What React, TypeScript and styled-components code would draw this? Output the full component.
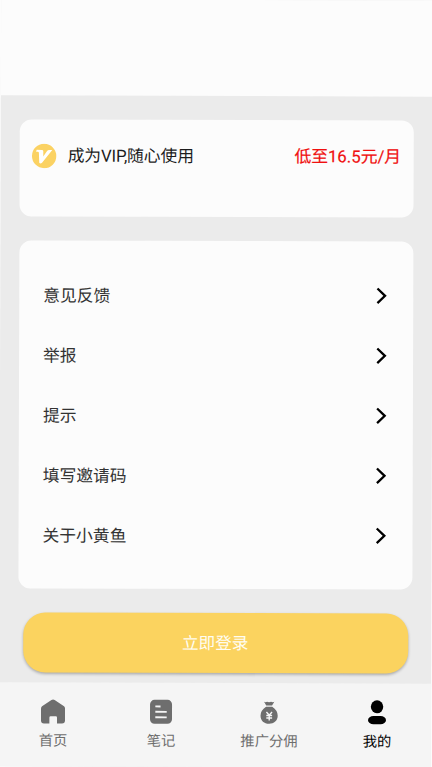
import React from "react";
import styled, { createGlobalStyle } from "styled-components";

const GlobalStyle = createGlobalStyle`
  * { box-sizing: border-box; }
  body {
    margin: 0;
    background: #fcfcfc;
    font-family: Roboto, "Noto Sans CJK SC", sans-serif;
    overflow: hidden;
  }
`;

const Page = styled.div`
  width: 432px;
  height: 767px;
  display: flex;
  flex-direction: column;
  background: #ebebeb;
  transform: rotate(0.17deg);
`;

const Header = styled.header`
  height: 96px;
  flex: none;
  background: #fcfcfc;
`;

const Content = styled.main`
  flex: 1;
  display: flex;
  flex-direction: column;
  padding: 24px 19px 0;
`;

const Card = styled.section`
  flex: none;
  background: #fcfcfc;
  border-radius: 12px;
`;

const VipCard = styled(Card)`
  height: 97px;
  padding: 23.5px 12.5px 0 11.5px;
`;

const VipRow = styled.div`
  display: flex;
  align-items: center;
  height: 25px;
`;

const VipTitle = styled.span`
  margin-left: 11.5px;
  padding-top: 1px;
  font-size: 16.8px;
  line-height: 25px;
  letter-spacing: -0.1px;
  color: #1c1c1c;
`;

const VipPrice = styled.span`
  margin-left: auto;
  font-size: 16.8px;
  line-height: 25px;
  color: #f01010;
  -webkit-text-stroke: 0.2px #f01010;
`;

const MenuCard = styled(Card)`
  height: 347.5px;
  margin-top: 24px;
  padding: 24px 26px 0 24px;
`;

const MenuRow = styled.div`
  display: flex;
  align-items: center;
  justify-content: space-between;
  height: 60px;
  font-size: 16.8px;
  color: #333;
`;

const LoginButton = styled.button`
  flex: none;
  height: 59.5px;
  margin: 24.5px 4.5px 0;
  padding: 0 0 2px;
  border: 0;
  border-radius: 22px;
  background: #fbd35f;
  color: #fffdf2;
  font: inherit;
  font-size: 16.6px;
  box-shadow: 0 1.5px 3px rgba(0, 0, 0, 0.28);
`;

const TabBar = styled.nav`
  flex: none;
  height: 84px;
  display: grid;
  grid-template-columns: repeat(4, 1fr);
  background: #f5f5f5;
`;

const Tab = styled.div<{ $active?: boolean }>`
  display: flex;
  flex-direction: column;
  align-items: center;
  padding: 16px 0 0 0;
  color: ${(p) => (p.$active ? "#000" : "#6e6e6e")};
`;

const TabLabel = styled.span`
  margin-top: 6px;
  font-size: 14.3px;
  line-height: 20px;
`;

const Icon = styled.svg`
  display: block;
  flex: none;
`;

const VipIcon = () => (
  <Icon width="25" height="25" viewBox="0 0 25 25">
    <circle cx="12.5" cy="12.5" r="12.2" fill="#fbd263" />
    <path d="M5 6.4 L10.2 6.4 Q11.6 6.4 11.6 7.8 L11.6 13 L15.4 7.6 Q16.2 6.6 17.4 6.6 L20.6 6.6 L10.4 19.2 Q8.9 20.6 7.6 19.4 L7.2 9.2 Q7.1 8.2 6.3 8.2 L4.4 8.2 Z" fill="#fff" />
  </Icon>
);

const Chevron = () => (
  <Icon width="12" height="18" viewBox="0 0 12 18">
    <path d="M2.2 2 L9.8 9.3 L2.2 16.6" fill="none" stroke="#000" strokeWidth="2.3" />
  </Icon>
);

const HomeIcon = () => (
  <Icon width="26" height="26" viewBox="0 0 26 26">
    <path d="M11.4 1.5 Q13 .4 14.6 1.5 L24 7.8 Q25 8.6 25 10 V22 Q25 25 22 25 H17 V19 Q17 17.8 15.8 17.8 H10.6 Q9.4 17.8 9.4 19 V25 H4 Q1 25 1 22 V10 Q1 8.6 2 7.8 Z" fill="currentColor" />
  </Icon>
);

const NoteIcon = () => (
  <Icon width="26" height="26" viewBox="0 0 26 26">
    <rect x="2" y="1" width="22" height="24" rx="4.5" fill="currentColor" />
    <path d="M7.3 7.6 H12.5 M7.3 13 H18.7 M7.3 18.5 H18.7" stroke="#f5f5f5" strokeWidth="1.9" />
  </Icon>
);

const MoneyIcon = () => (
  <Icon width="26" height="26" viewBox="0 0 26 26">
    <path d="M8 2.6 Q9.6 3.4 11 2.6 Q13 3.4 15 2.6 Q16.7 3.4 18.3 2.6 L16 6.4 H10.2 Z" fill="currentColor" />
    <path d="M10 7.6 H16.2 Q21.7 11.2 21.7 16.6 C21.7 21.6 18 24.6 13.1 24.6 C8.2 24.6 4.5 21.6 4.5 16.6 Q4.5 11.2 10 7.6 Z" fill="currentColor" />
    <path d="M10.4 12.8 L13.2 16 L16 12.8 M10.3 16.3 H16.1 M10.3 18.9 H16.1 M13.2 16 V21.4" fill="none" stroke="#f5f5f5" strokeWidth="1.4" />
  </Icon>
);

const UserIcon = () => (
  <Icon width="26" height="26" viewBox="0 0 26 26">
    <ellipse cx="13" cy="7.3" rx="6.2" ry="6.5" fill="currentColor" />
    <rect x="4" y="16.6" width="18" height="8.2" rx="5.5" ry="4.1" fill="currentColor" />
  </Icon>
);

const menuItems = ["意见反馈", "举报", "提示", "填写邀请码", "关于小黄鱼"];

const tabs = [
  { label: "首页", icon: HomeIcon },
  { label: "笔记", icon: NoteIcon },
  { label: "推广分佣", icon: MoneyIcon },
  { label: "我的", icon: UserIcon, active: true },
];

export default function App() {
  return (
    <>
      <GlobalStyle />
      <Page>
        <Header />
        <Content>
          <VipCard>
            <VipRow>
              <VipIcon />
              <VipTitle>成为VIP,随心使用</VipTitle>
              <VipPrice>低至16.5元/月</VipPrice>
            </VipRow>
          </VipCard>
          <MenuCard>
            {menuItems.map((item) => (
              <MenuRow key={item}>
                <span>{item}</span>
                <Chevron />
              </MenuRow>
            ))}
          </MenuCard>
          <LoginButton>立即登录</LoginButton>
        </Content>
        <TabBar>
          {tabs.map(({ label, icon: TabIcon, active }) => (
            <Tab key={label} $active={active}>
              <TabIcon />
              <TabLabel>{label}</TabLabel>
            </Tab>
          ))}
        </TabBar>
      </Page>
    </>
  );
}
